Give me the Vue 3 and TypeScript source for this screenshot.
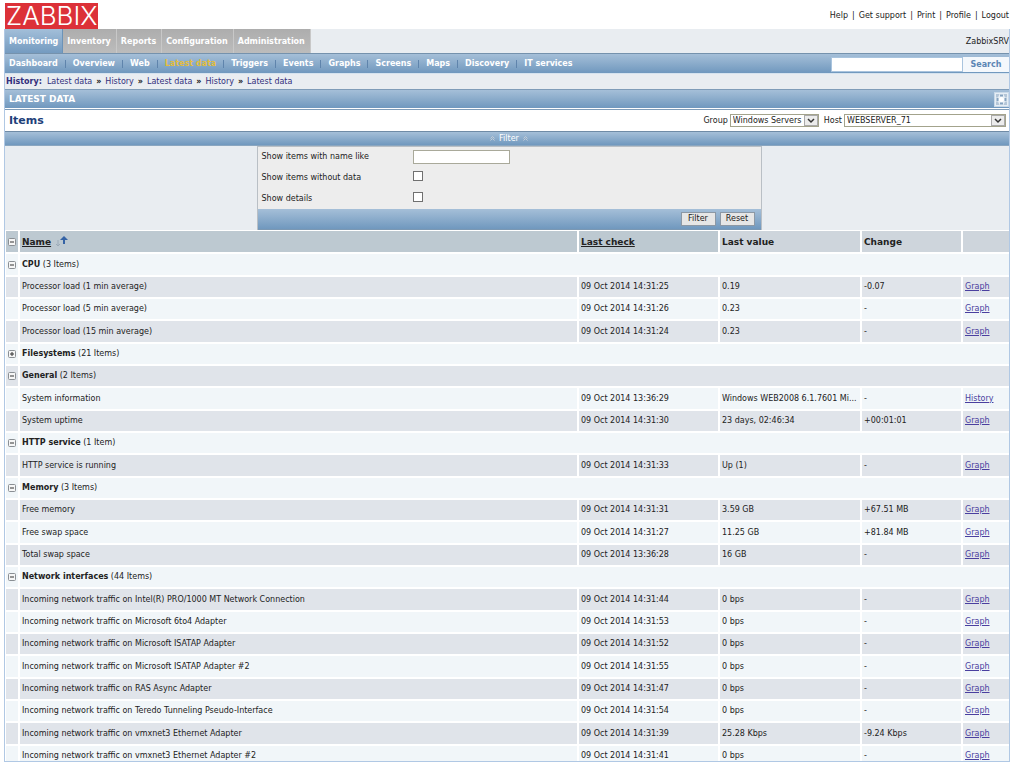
<script setup lang="ts">
import { ref } from 'vue'

interface Row {
  group?: boolean
  name: string
  count?: string
  open?: boolean
  check?: string
  value?: string
  change?: string
  link?: string
}

const group = (name: string, count: string, open = true): Row => ({ group: true, name, count, open })
const item = (name: string, time: string, value: string, change = '-', link = 'Graph'): Row => ({
  name,
  check: `09 Oct 2014 ${time}`,
  value,
  change,
  link,
})

const rows: Row[] = [
  group('CPU', '(3 Items)'),
  item('Processor load (1 min average)', '14:31:25', '0.19', '-0.07'),
  item('Processor load (5 min average)', '14:31:26', '0.23'),
  item('Processor load (15 min average)', '14:31:24', '0.23'),
  group('Filesystems', '(21 Items)', false),
  group('General', '(2 Items)'),
  item('System information', '13:36:29', 'Windows WEB2008 6.1.7601 Mi...', '-', 'History'),
  item('System uptime', '14:31:30', '23 days, 02:46:34', '+00:01:01'),
  group('HTTP service', '(1 Item)'),
  item('HTTP service is running', '14:31:33', 'Up (1)'),
  group('Memory', '(3 Items)'),
  item('Free memory', '14:31:31', '3.59 GB', '+67.51 MB'),
  item('Free swap space', '14:31:27', '11.25 GB', '+81.84 MB'),
  item('Total swap space', '13:36:28', '16 GB'),
  group('Network interfaces', '(44 Items)'),
  item('Incoming network traffic on Intel(R) PRO/1000 MT Network Connection', '14:31:44', '0 bps'),
  item('Incoming network traffic on Microsoft 6to4 Adapter', '14:31:53', '0 bps'),
  item('Incoming network traffic on Microsoft ISATAP Adapter', '14:31:52', '0 bps'),
  item('Incoming network traffic on Microsoft ISATAP Adapter #2', '14:31:55', '0 bps'),
  item('Incoming network traffic on RAS Async Adapter', '14:31:47', '0 bps'),
  item('Incoming network traffic on Teredo Tunneling Pseudo-Interface', '14:31:54', '0 bps'),
  item('Incoming network traffic on vmxnet3 Ethernet Adapter', '14:31:39', '25.28 Kbps', '-9.24 Kbps'),
  item('Incoming network traffic on vmxnet3 Ethernet Adapter #2', '14:31:41', '0 bps'),
]

const topLinks = ['Help', 'Get support', 'Print', 'Profile', 'Logout']
const tabs = ['Monitoring', 'Inventory', 'Reports', 'Configuration', 'Administration']
const menu = ['Dashboard', 'Overview', 'Web', 'Latest data', 'Triggers', 'Events', 'Graphs', 'Screens', 'Maps', 'Discovery', 'IT services']
const trail = ['Latest data', 'History', 'Latest data', 'History', 'Latest data']

const search = ref('')
const nameLike = ref('')
const withoutData = ref(false)
const details = ref(false)
</script>

<template>
  <div class="page">
    <header class="top">
      <a class="logo" href="#">ZABBIX</a>
      <nav class="top-links">
        <template v-for="(l, i) in topLinks" :key="l">
          <span v-if="i">|</span><a href="#">{{ l }}</a>
        </template>
      </nav>
    </header>

    <div class="frame">
      <div class="tabs">
        <a v-for="(t, i) in tabs" :key="t" href="#" class="tab" :class="{ active: i === 0 }">{{ t }}</a>
        <span class="server">ZabbixSRV</span>
      </div>

      <div class="menu">
        <nav class="menu-links">
          <template v-for="(m, i) in menu" :key="m">
            <span v-if="i" class="sep"></span>
            <a href="#" :class="{ current: m === 'Latest data' }">{{ m }}</a>
          </template>
        </nav>
        <form class="search" @submit.prevent>
          <input v-model="search" type="text" aria-label="Search" />
          <button type="submit">Search</button>
        </form>
      </div>

      <div class="trail">
        <b>History:</b>
        <template v-for="(t, i) in trail" :key="i">
          <span v-if="i" class="arrow">»</span><a href="#">{{ t }}</a>
        </template>
      </div>

      <div class="title-bar">
        <h1>LATEST DATA</h1>
        <button type="button" class="full" aria-label="Fullscreen">
          <svg width="15" height="15" viewBox="0 0 15 15">
            <rect x="0.5" y="0.5" width="14" height="14" fill="#e6eef5" stroke="#c9d9e8" />
            <path d="M2 2h3.500L4 5.500H2zM13 2H9.500L11 5.500h2zM2 13h3.500L4 9.500H2zM13 13H9.500L11 9.500h2z" fill="#b4c6d8" />
            <path d="M6 2.500h3v2H6zM6 10.500h3v2H6zM2.500 6h2v3h-2zM10.500 6h2v3h-2z" fill="#86a3c0" />
            <circle cx="7.500" cy="7.500" r="2.500" fill="#fff" />
          </svg>
        </button>
      </div>

      <div class="items-bar">
        <h2>Items</h2>
        <label for="group">Group</label>
        <span class="select group-select">
          <select id="group"><option>Windows Servers</option></select>
          <svg width="14" height="11" viewBox="0 0 14 11">
            <rect x="0.5" y="0.5" width="13" height="10" fill="#ececec" stroke="#aaa" />
            <path d="M4 4l3 3 3-3" fill="none" stroke="#333" stroke-width="1.5" />
          </svg>
        </span>
        <label for="host" class="host-label">Host</label>
        <span class="select host-select">
          <select id="host"><option>WEBSERVER_71</option></select>
          <svg width="14" height="11" viewBox="0 0 14 11">
            <rect x="0.5" y="0.5" width="13" height="10" fill="#ececec" stroke="#aaa" />
            <path d="M4 4l3 3 3-3" fill="none" stroke="#333" stroke-width="1.5" />
          </svg>
        </span>
      </div>

      <button type="button" class="filter-toggle">
        <svg width="5" height="5" viewBox="0 0 5 5"><path d="M.5 2.5l2-2 2 2M.5 4.5l2-2 2 2" /></svg>
        Filter
        <svg width="5" height="5" viewBox="0 0 5 5"><path d="M.5 2.5l2-2 2 2M.5 4.5l2-2 2 2" /></svg>
      </button>

      <div class="filter-area">
        <form class="filter" @submit.prevent>
          <div class="field">
            <label for="like">Show items with name like</label>
            <input id="like" v-model="nameLike" type="text" />
          </div>
          <div class="field">
            <label for="nodata">Show items without data</label>
            <input id="nodata" v-model="withoutData" type="checkbox" />
          </div>
          <div class="field">
            <label for="details">Show details</label>
            <input id="details" v-model="details" type="checkbox" />
          </div>
          <div class="actions">
            <button type="submit">Filter</button>
            <button type="reset">Reset</button>
          </div>
        </form>
      </div>

      <table>
        <colgroup>
          <col class="c-toggle" /><col /><col class="c-check" /><col class="c-value" /><col class="c-change" /><col class="c-link" />
        </colgroup>
        <thead>
          <tr>
            <th class="sorted toggle">
              <button type="button" aria-label="Collapse all">
                <svg width="8" height="8" viewBox="0 0 8 8"><rect x=".5" y=".5" width="7" height="7" rx="1" /><path d="M2 4h4" /></svg>
              </button>
            </th>
            <th class="sorted">
              <span class="name-head">
                <a href="#">Name</a>
                <svg width="14" height="14" viewBox="0 0 14 14">
                  <path d="M3 5v6M1 9l2 2 2-2" fill="none" stroke="#9cabb8" />
                  <path d="M9 1l4 4h-3v4H8V5H5z" fill="#3563a5" />
                </svg>
              </span>
            </th>
            <th class="sorted"><a href="#">Last check</a></th>
            <th>Last value</th>
            <th>Change</th>
            <th></th>
          </tr>
        </thead>
        <tbody>
          <tr v-for="(r, i) in rows" :key="i">
            <td class="toggle">
              <button v-if="r.group" type="button" :aria-label="r.name">
                <svg width="8" height="8" viewBox="0 0 8 8">
                  <rect x=".5" y=".5" width="7" height="7" rx="1" />
                  <path :d="r.open ? 'M2 4h4' : 'M2 4h4M4 2v4'" />
                </svg>
              </button>
            </td>
            <td v-if="r.group" colspan="5"><b>{{ r.name }}</b> {{ r.count }}</td>
            <template v-else>
              <td>{{ r.name }}</td>
              <td>{{ r.check }}</td>
              <td>{{ r.value }}</td>
              <td>{{ r.change }}</td>
              <td><a href="#">{{ r.link }}</a></td>
            </template>
          </tr>
        </tbody>
      </table>
    </div>
  </div>
</template>

<style>
body {
  margin: 0;
  background: #fff;
}
</style>

<style scoped>
.page {
  box-sizing: border-box;
  display: flex;
  flex-direction: column;
  height: 100vh;
  padding: 3px 7px 5px 4px;
  font-family: Verdana, "DejaVu Sans", sans-serif;
  font-size: 8px;
  line-height: 12px;
  color: #222;
}
.page * {
  box-sizing: border-box;
}
button,
input,
select {
  margin: 0;
  padding: 0;
  font: inherit;
  color: inherit;
}
svg {
  display: block;
}
a {
  color: inherit;
  text-decoration: none;
}
.top {
  display: flex;
  justify-content: space-between;
  flex: none;
  height: 26px;
  padding: 0 1px;
}
.logo {
  padding: 0 1px;
  background: #dc3138;
  color: #fff;
  font: 300 26px/26px Inter, "Noto Sans", sans-serif;
}
.top-links {
  display: flex;
  gap: 4px;
  padding-top: 7px;
}
.frame {
  flex: 1;
  min-height: 0;
  overflow: hidden;
  border: solid #b0c8e4;
  border-width: 0 1px 1px;
}
.tabs {
  display: flex;
  height: 24px;
  background: #e9edf1;
}
.tab {
  padding: 0 5px 0 4px;
  border-right: 1px solid #c8c8c8;
  background: linear-gradient(#adadad, #bcbcbc);
  color: #fff;
  font-weight: bold;
  line-height: 25px;
}
.tab.active {
  padding-right: 4px;
  border-color: #6b93b8;
  background: linear-gradient(#a3bfd9, #749bc0);
}
.server {
  margin-left: auto;
  line-height: 25px;
}
.menu,
.title-bar,
.filter-toggle,
.actions {
  background: linear-gradient(#a5bfd8, #7098be);
}
.menu {
  display: flex;
  justify-content: space-between;
  height: 21px;
  border-top: 1px solid #7592ad;
  border-bottom: 1px solid #d5e3ef;
}
.menu-links {
  display: flex;
  align-items: center;
  gap: 7px;
  padding-left: 4px;
  color: #fff;
  font-weight: bold;
}
.sep {
  width: 1px;
  height: 8px;
  background: #5f84ac;
}
.current {
  color: #e3bd3c;
}
.search {
  display: flex;
  padding: 3px 0 1px;
}
.search input {
  width: 132px;
  border: 1px solid #a9c4de;
  background: #fff;
}
.search button {
  width: 46px;
  border: 0;
  background: #f4f8fc;
  color: #5c86b4;
  font-weight: bold;
}
.trail {
  display: flex;
  gap: 4px;
  height: 15px;
  padding-left: 1px;
  background: #e9edf1;
  color: #33307c;
  line-height: 16px;
}
.trail b {
  margin-right: 1px;
}
.arrow {
  color: #111;
  font-weight: bold;
}
.title-bar {
  display: flex;
  justify-content: space-between;
  align-items: center;
  height: 19px;
  padding: 0 0 0 4px;
  border-top: 1px solid #7f9cb8;
}
h1,
h2 {
  margin: 0;
  font-size: 9px;
  color: #fff;
}
.full {
  border: 0;
  background: none;
}
.items-bar {
  display: flex;
  align-items: center;
  height: 22px;
  margin-top: 1px;
  padding: 0 3px 0 4px;
  border-top: 1px solid #7f9cb8;
  background: #fff;
}
.items-bar h2 {
  margin-right: auto;
  color: #1d4079;
  font-size: 11px;
}
.items-bar label {
  margin-right: 2px;
}
.items-bar .host-label {
  margin-left: 5px;
}
.select {
  position: relative;
}
.select select {
  display: block;
  appearance: none;
  width: 100%;
  height: 13px;
  padding: 0 15px 0 2px;
  border: 1px solid #a3a38c;
  border-radius: 0;
  background: #fff;
}
.select svg {
  position: absolute;
  top: 1px;
  right: 1px;
  pointer-events: none;
}
.group-select {
  width: 89px;
}
.host-select {
  width: 162px;
}
.filter-toggle {
  display: flex;
  justify-content: center;
  align-items: center;
  gap: 4px;
  width: 100%;
  height: 15px;
  border: 0;
  border-top: 1px solid #6f8ba6;
  border-bottom: 1px solid #8aa6c0;
  padding-left: 4px;
  color: #fff;
}
.filter-toggle path {
  fill: none;
  stroke: #c4cdd6;
}
.filter-area {
  padding-left: 4px;
  background: #e9edf1;
}
.filter {
  width: 50%;
  min-width: 505px;
  margin: 0 auto;
  border: solid #b9bfc5;
  border-width: 1px 1px 0;
  background: #ededed;
}
.field {
  display: flex;
  align-items: center;
  height: 21px;
  padding-left: 4px;
}
.field:first-child {
  height: 20px;
}
.field label {
  width: 151px;
}
.field input[type="text"] {
  width: 97px;
  height: 14px;
  border: 1px solid #a9a99a;
  background: #fff;
}
.field input[type="checkbox"] {
  appearance: none;
  width: 10px;
  height: 10px;
  margin-bottom: 4px;
  border: 1px solid #707070;
  background: #fff;
}
.actions {
  display: flex;
  justify-content: flex-end;
  align-items: center;
  gap: 4px;
  height: 21px;
  padding-right: 6px;
  border-bottom: 1px solid #7b98b3;
}
.actions button {
  width: 35px;
  height: 14px;
  border: 1px solid #8c98a5;
  background: #e6e6e6;
  line-height: 10px;
}
table {
  width: 100%;
  margin-top: 1px;
  padding-left: 1px;
  border-spacing: 0;
  table-layout: fixed;
}
.c-toggle {
  width: 14px;
}
.c-check {
  width: 141px;
}
.c-value {
  width: 142px;
}
.c-change {
  width: 101px;
}
.c-link {
  width: 46px;
}
th,
td {
  padding: 0 0 0 2px;
  border-right: 2px solid #fff;
  border-bottom: 2px solid #fff;
  text-align: left;
  white-space: nowrap;
  overflow: hidden;
}
th:last-child,
td:last-child {
  border-right: 0;
}
th {
  height: 23px;
  background: #ced5dc;
  font-size: 9px;
}
th.sorted {
  background: #bdc9d1;
}
th a,
td a {
  text-decoration: underline;
}
td a {
  color: #4a3f9f;
}
td {
  height: 22px;
  background: #f1f6f9;
}
tbody tr:nth-child(even) td {
  background: #e0e4ea;
}
tbody tr:nth-child(3n + 1) td {
  height: 23px;
}
.toggle button {
  display: block;
  border: 0;
  background: none;
}
.toggle rect {
  fill: #f6f6f6;
  stroke: #8a8f94;
}
.toggle path {
  stroke: #333;
}
.name-head {
  display: flex;
  align-items: center;
  gap: 4px;
}
</style>
